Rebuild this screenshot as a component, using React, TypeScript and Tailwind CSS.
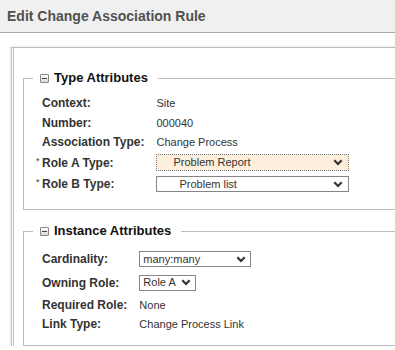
import { ReactNode } from 'react';

function Chevron() {
  return (
    <svg width="10" height="7" viewBox="0 0 10 7" className="shrink-0">
      <path d="M1.3 1.3 L5 5 L8.7 1.3" fill="none" stroke="#333" strokeWidth="2.2" />
    </svg>
  );
}

function FakeSelect({ value, className }: { value: string; className: string }) {
  return (
    <div className={`flex items-center justify-between text-[11px] leading-none text-[#333] ${className}`}>
      <span>{value}</span>
      <Chevron />
    </div>
  );
}

function CollapseIcon() {
  return (
    <span className="flex h-[9px] w-[9px] items-center justify-center rounded-[1px] border border-[#8a8a8a] bg-gradient-to-b from-white to-[#d8d8d8]">
      <span className="h-px w-[5px] bg-[#444]" />
    </span>
  );
}

function Label({ children, required }: { children: ReactNode; required?: boolean }) {
  return (
    <div className="self-center whitespace-nowrap pl-[18px] text-[12px] font-bold leading-[14px] text-[#333]">
      {required && (
        <span className="-ml-[6px] inline-block w-[6px] align-top text-[9px] font-normal leading-[10px]">*</span>
      )}
      {children}
    </div>
  );
}

function Value({ children }: { children: ReactNode }) {
  return <div className="self-center whitespace-nowrap text-[11px] leading-[14px] text-[#333]">{children}</div>;
}

function Section({ title, children }: { title: string; children: ReactNode }) {
  return (
    <fieldset className="ml-[9px] border border-[#bdbdbd]">
      <legend className="ml-[9px] flex h-[16px] items-center gap-[5px] pl-[7px] pr-[10px]">
        <CollapseIcon />
        <span className="text-[13px] font-bold leading-[16px] text-[#111]">{title}</span>
      </legend>
      {children}
    </fieldset>
  );
}

export default function App() {
  return (
    <div className="h-[350px] w-full overflow-hidden bg-white font-['Liberation_Sans',Arial,sans-serif]">
      <div className="flex h-[33px] items-center border-b border-[#a9a9a9] bg-[#f0f0f0] pl-[7px]">
        <h1 className="text-[14px] font-bold text-[#505050]">Edit Change Association Rule</h1>
      </div>

      <div className="ml-[11px] mt-[14px] w-[440px] border-l-[3px] border-t border-double border-[#bdbdbd] pt-[22px] shadow-[-1px_-1px_2px_rgba(0,0,0,0.08)]">
        <Section title="Type Attributes">
          <div className="mt-[7px] grid grid-cols-[auto_1fr] grid-rows-[20px_19px_20px_21px_22px] gap-x-[12px] pb-[14px]">
            <Label>Context:</Label>
            <Value>Site</Value>
            <Label>Number:</Label>
            <Value>000040</Value>
            <Label>Association Type:</Label>
            <Value>Change Process</Value>
            <Label required>Role A Type:</Label>
            <FakeSelect
              value="Problem Report"
              className="h-[17px] w-[193px] self-center border border-dotted border-[#777] bg-[#fdefdc] pl-[16px] pr-[5px]"
            />
            <Label required>Role B Type:</Label>
            <FakeSelect
              value="Problem list"
              className="h-[16px] w-[193px] self-center border border-[#858585] bg-white pl-[22px] pr-[5px]"
            />
          </div>
        </Section>

        <div className="h-[13px]" />

        <Section title="Instance Attributes">
          <div className="mt-[9px] grid grid-cols-[auto_1fr] grid-rows-[22px_25px_19px_19px] gap-x-[12px] pb-[12px]">
            <Label>Cardinality:</Label>
            <FakeSelect
              value="many:many"
              className="h-[16px] w-[112px] self-center border border-[#858585] bg-white pl-[3px] pr-[4px]"
            />
            <Label>Owning Role:</Label>
            <FakeSelect
              value="Role A"
              className="h-[16px] w-[57px] self-center border border-[#858585] bg-white pl-[3px] pr-[4px]"
            />
            <Label>Required Role:</Label>
            <Value>None</Value>
            <Label>Link Type:</Label>
            <Value>Change Process Link</Value>
          </div>
        </Section>
      </div>
    </div>
  );
}
